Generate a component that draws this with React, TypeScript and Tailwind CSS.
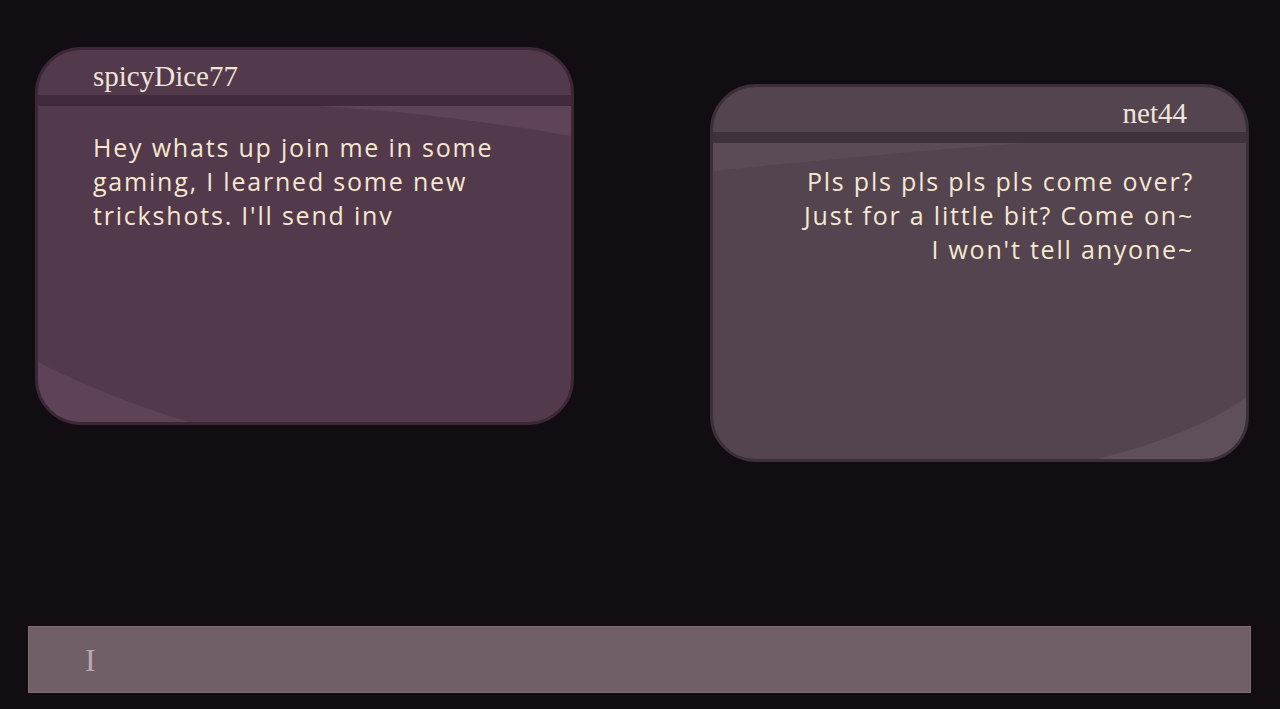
import React from "react";

type Msg = {
  user: string;
  lines: string[];
  own: boolean;
};

const messages: Msg[] = [
  {
    user: "spicyDice77",
    lines: ["Hey whats up join me in some", "gaming, I learned some new", "trickshots. I'll send inv"],
    own: false,
  },
  {
    user: "net44",
    lines: ["Pls pls pls pls pls come over?", "Just for a little bit? Come on~", "I won't tell anyone~"],
    own: true,
  },
];

function Bubble({ msg }: { msg: Msg }) {
  const right = msg.own;
  return (
    <div
      className={`relative w-[539px] h-[378px] rounded-[46px] border-[3px] overflow-hidden ${
        right ? "bg-[#53444f] border-[#3b2f38] mt-[37px]" : "bg-[#53394c] border-[#3b2735]"
      }`}
    >
      {/* glossy highlights */}
      <svg className="absolute inset-0 pointer-events-none" width="533" height="372" viewBox="0 0 533 372">
        {right ? (
          <>
            <path d="M0 55 L0 84 C120 72 220 62 330 55 Z" fill="#5b4b57" />
            <path d="M533 310 L533 372 L385 372 C450 355 500 335 533 310 Z" fill="#5f4f5b" />
          </>
        ) : (
          <>
            <path d="M533 55 L533 86 C440 70 360 60 260 55 Z" fill="#5f4458" />
            <path d="M0 312 C45 335 95 355 150 372 L0 372 Z" fill="#5e4358" />
          </>
        )}
      </svg>
      <div
        className={`relative h-[45px] flex items-end pb-[4px] ${right ? "justify-end pr-[59px]" : "pl-[55px]"}`}
      >
        <span className="text-[29px] leading-none text-[#f0e4d8] font-['Liberation_Serif',serif]">
          {msg.user}
        </span>
      </div>
      <div className={`relative h-[11px] ${right ? "bg-[#3f323c]" : "bg-[#412a3b]"}`} />
      <div
        className={`relative text-[25px] leading-[34px] tracking-[1.8px] text-[#f6e8cf] font-['Comic_Sans_MS','Open_Sans',sans-serif] ${
          right ? "text-right pr-[52px] pt-[21px]" : "pl-[55px] pt-[24px]"
        }`}
      >
        {msg.lines.map((l, i) => (
          <div key={i} className="whitespace-nowrap">
            {l}
          </div>
        ))}
      </div>
    </div>
  );
}

export default function App() {
  return (
    <div className="w-[1280px] h-[709px] bg-[#110d12] flex flex-col">
      <div className="flex items-start justify-between pl-[35px] pr-[31px] pt-[47px]">
        {messages.map((m) => (
          <Bubble key={m.user} msg={m} />
        ))}
      </div>
      <div className="mt-auto mb-[16px] ml-[28px] w-[1223px] h-[67px] bg-[#715f68] border border-[#7d6b74] flex items-center pl-[56px]">
        <span className="text-[32px] text-[#b9a9b0] font-['Liberation_Serif',serif]">I</span>
      </div>
    </div>
  );
}
